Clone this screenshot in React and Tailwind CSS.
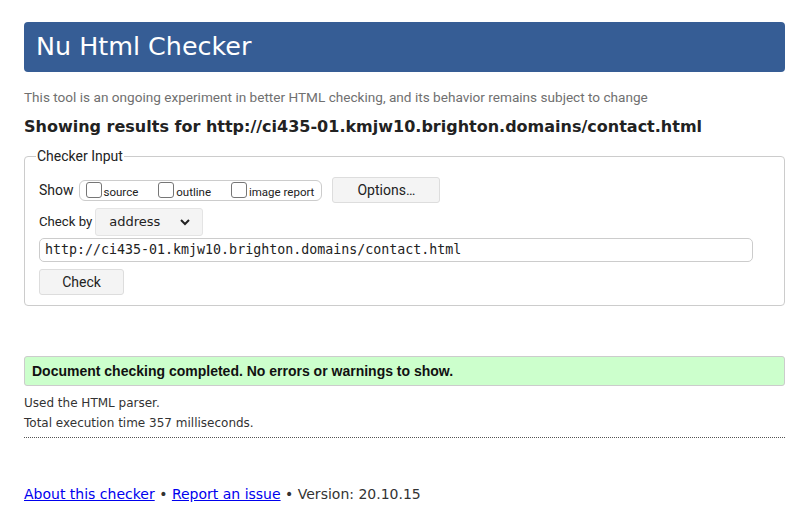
import React from "react";

const fira = { fontFamily: "Roboto, 'Noto Sans', sans-serif" };

function Box({ label }) {
  return (
    <span className="inline-flex items-end">
      <span className="inline-block w-[16px] h-[16px] border border-[#767676] rounded-[3px] bg-white mr-[2px] mb-[1px]" />
      <span className="text-[11.5px] leading-[14px] text-[#222]">{label}</span>
    </span>
  );
}

export default function App() {
  return (
    <div className="min-h-[524px] bg-white px-6 pt-[22px] text-[#222]" style={{ fontFamily: "'DejaVu Sans', sans-serif" }}>
      <div className="h-[50px] bg-[#365d95] rounded-[4px] flex items-center px-3">
        <h1 className="text-[25.4px] leading-none text-white font-normal">Nu Html Checker</h1>
      </div>

      <p className="mt-[15px] text-[13.6px] leading-[20px] text-[#707070]" style={fira}>
        This tool is an ongoing experiment in better HTML checking, and its behavior remains subject to change
      </p>

      <h2 className="mt-[8px] text-[16px] leading-[24px] font-bold text-[#222]">
        Showing results for http://ci435-01.kmjw10.brighton.domains/contact.html
      </h2>

      <fieldset className="mt-[7px] border border-[#ccc] rounded-[4px] pl-[14px] pr-[14px] pb-[10px]" style={fira}>
        <legend className="ml-[-3px] px-[1px] text-[14px] leading-[20px] text-[#222]">Checker Input</legend>
        <div className="mt-[11px] flex items-center h-[26px]">
          <span className="text-[14px] mr-[5px]">Show</span>
          <span className="h-[21px] border border-[#ccc] rounded-[6px] flex items-center pl-[6px] pr-[7px] gap-[20px]">
            <Box label="source" />
            <Box label="outline" />
            <Box label="image report" />
          </span>
          <button className="ml-[10px] w-[108px] h-[26px] bg-[#f4f4f4] border border-[#ddd] rounded-[3px] text-[14px] text-[#222]">
            Options…
          </button>
        </div>
        <div className="mt-[5px] flex items-center h-[28px]">
          <span className="text-[13.2px] mr-[3px]">Check by</span>
          <span className="w-[108px] h-[28px] bg-[#f4f4f4] border border-[#e4e4e4] rounded-[3px] flex items-center justify-between pl-[13px] pr-[11px] text-[13px]" style={{ fontFamily: "'DejaVu Sans', sans-serif" }}>
            address
            <svg width="12" height="8" viewBox="0 0 12 8"><path d="M2 2l4 4 4-4" stroke="#222" strokeWidth="2" fill="none" /></svg>
          </span>
        </div>
        <div className="mt-[2px] w-[714px] h-[24px] border border-[#ccc] rounded-[5px] flex items-center pl-[5px] text-[13.3px] text-[#222]" style={{ fontFamily: "'DejaVu Sans Mono', monospace" }}>
          http://ci435-01.kmjw10.brighton.domains/contact.html
        </div>
        <button className="mt-[7px] w-[85px] h-[26px] bg-[#f4f4f4] border border-[#ddd] rounded-[3px] text-[14px] text-[#222] block">
          Check
        </button>
      </fieldset>

      <div className="mt-[50px] h-[30px] bg-[#ccffcc] border border-[#ccc] rounded-[3px] flex items-center px-[7px] text-[14px] font-bold text-[#111]" style={{ fontFamily: "'Liberation Sans', Arial, sans-serif" }}>
        Document checking completed. No errors or warnings to show.
      </div>

      <p className="mt-[7px] text-[12px] leading-[20px] text-[#333]">Used the HTML parser.</p>
      <p className="text-[12px] leading-[20px] text-[#333]">Total execution time 357 milliseconds.</p>
      <div className="mt-[4px] border-t border-dotted border-[#555]" />

      <p className="mt-[46px] text-[14px] leading-[20px] text-[#333]">
        <a href="#" className="text-[#0000ee] underline">About this checker</a>
        {" • "}
        <a href="#" className="text-[#0000ee] underline">Report an issue</a>
        {" • Version: 20.10.15"}
      </p>
    </div>
  );
}
